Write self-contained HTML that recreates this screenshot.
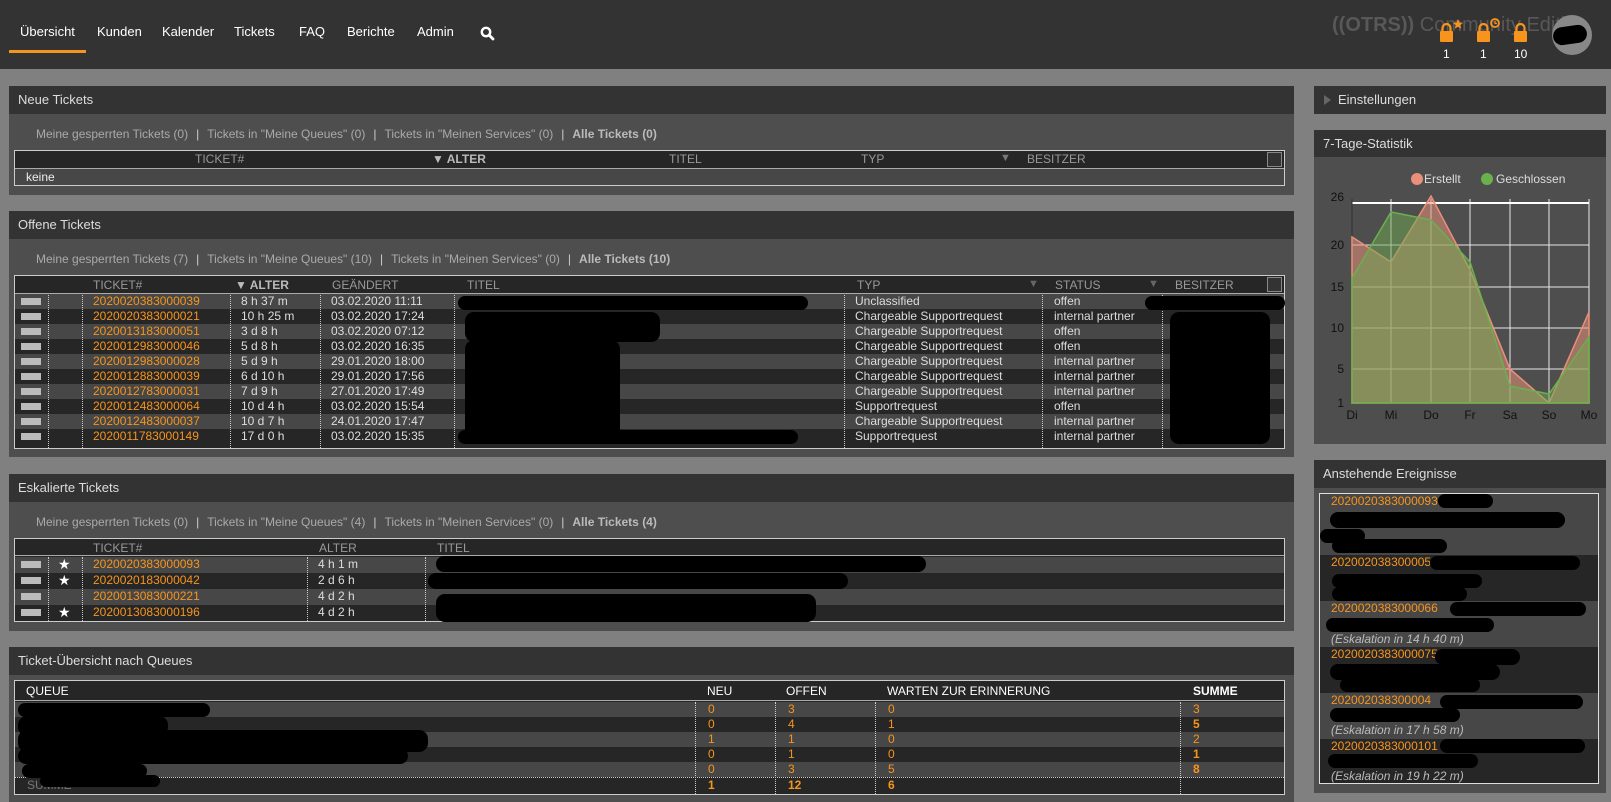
<!DOCTYPE html>
<html><head><meta charset="utf-8"><style>
*{margin:0;padding:0;box-sizing:border-box}
body{width:1611px;height:802px;overflow:hidden;background:#808080;font-family:"Liberation Sans",sans-serif;font-size:12px;color:#ddd;position:relative}
.a{position:absolute}
.hd{background:#333;color:#ddd;font-size:13px;padding-left:9px;line-height:27px}
.bd{background:#4e4e4e}
.lk{color:#aaa;font-size:12px;white-space:nowrap}
.lk b{color:#bbb}
.lk i{font-style:normal;color:#ccc;margin:0 8px}
.tb{border:1px solid #ccc;background:#262626}
.th{background:#262626;color:#999;font-size:11px;line-height:18px;border-bottom:1px solid #aaa}
.r{height:15px;line-height:15px;white-space:nowrap;font-size:12px}
.o{background:#474747}.e{background:#262626}
.or{color:#f7941d}
.dl{border-left:1px dotted #ccc}
.cb{width:20px;height:7px;background:#bbb;top:4px;left:6px}
.blk{background:#000;border-radius:9px}
.hx{font-size:12px;color:#999}
</style></head><body>
<!-- header -->
<div class="a" style="left:0;top:0;width:1611px;height:69px;background:#333"></div>
<div class="a" style="top:24px;left:20px;font-size:13px;color:#fff;white-space:nowrap">Übersicht</div>
<div class="a" style="top:24px;left:97px;font-size:13px;color:#fff">Kunden</div>
<div class="a" style="top:24px;left:162px;font-size:13px;color:#fff">Kalender</div>
<div class="a" style="top:24px;left:234px;font-size:13px;color:#fff">Tickets</div>
<div class="a" style="top:24px;left:299px;font-size:13px;color:#fff">FAQ</div>
<div class="a" style="top:24px;left:347px;font-size:13px;color:#fff">Berichte</div>
<div class="a" style="top:24px;left:417px;font-size:13px;color:#fff">Admin</div>
<svg class="a" style="left:480px;top:26px" width="15" height="15" viewBox="0 0 15 15"><circle cx="6" cy="6" r="4.2" stroke="#fff" stroke-width="2.4" fill="none"/><path d="M9 9l4 4" stroke="#fff" stroke-width="2.8" stroke-linecap="round"/></svg>
<div class="a" style="left:9px;top:50px;width:77px;height:3px;background:#f7941d"></div>
<div class="a" style="left:1332px;top:14px;font-size:20px;color:#585858;white-space:nowrap"><b>((OTRS))</b> Community Edition</div>
<svg class="a" style="left:1436px;top:18px" width="140" height="28">
<g fill="#f7941d"><rect x="4" y="13" width="13" height="11" rx="1"/><path d="M6.5 13v-3a4 4 0 0 1 8 0v3" stroke="#f7941d" stroke-width="2.2" fill="none"/>
<path d="M22 1l1.5 3.5 3.5.3-2.7 2.3.9 3.6-3.2-2-3.2 2 .9-3.6-2.7-2.3 3.5-.3z"/>
<rect x="41" y="13" width="13" height="11" rx="1"/><path d="M43.5 13v-3a4 4 0 0 1 8 0v3" stroke="#f7941d" stroke-width="2.2" fill="none"/>
<circle cx="59" cy="5" r="4" stroke="#f7941d" stroke-width="1.8" fill="none"/><path d="M59 3v2.5h2" stroke="#f7941d" stroke-width="1.2" fill="none"/>
<rect x="78" y="13" width="13" height="11" rx="1"/><path d="M80.5 13v-3a4 4 0 0 1 8 0v3" stroke="#f7941d" stroke-width="2.2" fill="none"/></g></svg>
<div class="a" style="left:1443px;top:47px;color:#fff;font-size:12px">1</div>
<div class="a" style="left:1480px;top:47px;color:#fff;font-size:12px">1</div>
<div class="a" style="left:1514px;top:47px;color:#fff;font-size:12px">10</div>
<div class="a" style="left:1552px;top:15px;width:40px;height:40px;border-radius:50%;background:#888"></div>
<div class="a" style="left:1553px;top:26px;width:34px;height:18px;border-radius:10px;background:#000;transform:rotate(-8deg)"></div>

<!-- Neue Tickets -->
<div class="a hd" style="left:9px;top:86px;width:1285px;height:28px">Neue Tickets</div>
<div class="a bd" style="left:9px;top:114px;width:1285px;height:81px"></div>
<div class="a lk" style="left:36px;top:127px">Meine gesperrten Tickets (0)<i>|</i>Tickets in "Meine Queues" (0)<i>|</i>Tickets in "Meinen Services" (0)<i>|</i><b>Alle Tickets (0)</b></div>
<div class="a tb" style="left:14px;top:150px;width:1271px;height:36px;background:#474747"></div>
<div class="a th" style="left:15px;top:151px;width:1269px;height:18px"></div>
<div class="a hx" style="left:195px;top:152px">TICKET#</div>
<div class="a hx" style="left:432px;top:152px;color:#bbb"><b>▼ ALTER</b></div>
<div class="a hx" style="left:669px;top:152px">TITEL</div>
<div class="a hx" style="left:861px;top:152px">TYP</div>
<div class="a" style="left:1000px;top:152px;font-size:11px;color:#777">▼</div>
<div class="a hx" style="left:1027px;top:152px">BESITZER</div>
<div class="a" style="left:1267px;top:152px;width:15px;height:15px;border:1px solid #888;background:#333"></div>
<div class="a" style="left:26px;top:170px;color:#eee">keine</div>

<!-- Offene Tickets -->
<div class="a hd" style="left:9px;top:211px;width:1285px;height:28px">Offene Tickets</div>
<div class="a bd" style="left:9px;top:239px;width:1285px;height:218px"></div>
<div class="a lk" style="left:36px;top:252px">Meine gesperrten Tickets (7)<i>|</i>Tickets in "Meine Queues" (10)<i>|</i>Tickets in "Meinen Services" (0)<i>|</i><b>Alle Tickets (10)</b></div>
<div class="a tb" style="left:14px;top:275px;width:1271px;height:174px"></div>
<div class="a th" style="left:15px;top:276px;width:1269px;height:18px"></div>
<div class="a hx" style="left:93px;top:278px">TICKET#</div>
<div class="a hx" style="left:235px;top:278px;color:#bbb"><b>▼ ALTER</b></div>
<div class="a hx" style="left:332px;top:278px">GEÄNDERT</div>
<div class="a hx" style="left:467px;top:278px">TITEL</div>
<div class="a hx" style="left:857px;top:278px">TYP</div>
<div class="a" style="left:1028px;top:278px;font-size:11px;color:#666">▼</div>
<div class="a hx" style="left:1055px;top:278px">STATUS</div>
<div class="a" style="left:1148px;top:278px;font-size:11px;color:#666">▼</div>
<div class="a hx" style="left:1175px;top:278px">BESITZER</div>
<div class="a" style="left:1267px;top:277px;width:15px;height:15px;border:1px solid #888;background:#333"></div>
<div class="a" style="left:15px;top:294px;width:1269px">
<div class="r o" style="position:relative"><div class="a cb"></div><span class="a or" style="left:78px">2020020383000039</span><span class="a" style="left:226px">8 h 37 m</span><span class="a" style="left:316px">03.02.2020 11:11</span><span class="a" style="left:840px">Unclassified</span><span class="a" style="left:1039px">offen</span></div>
<div class="r e" style="position:relative"><div class="a cb"></div><span class="a or" style="left:78px">2020020383000021</span><span class="a" style="left:226px">10 h 25 m</span><span class="a" style="left:316px">03.02.2020 17:24</span><span class="a" style="left:840px">Chargeable Supportrequest</span><span class="a" style="left:1039px">internal partner</span></div>
<div class="r o" style="position:relative"><div class="a cb"></div><span class="a or" style="left:78px">2020013183000051</span><span class="a" style="left:226px">3 d 8 h</span><span class="a" style="left:316px">03.02.2020 07:12</span><span class="a" style="left:840px">Chargeable Supportrequest</span><span class="a" style="left:1039px">offen</span></div>
<div class="r e" style="position:relative"><div class="a cb"></div><span class="a or" style="left:78px">2020012983000046</span><span class="a" style="left:226px">5 d 8 h</span><span class="a" style="left:316px">03.02.2020 16:35</span><span class="a" style="left:840px">Chargeable Supportrequest</span><span class="a" style="left:1039px">offen</span></div>
<div class="r o" style="position:relative"><div class="a cb"></div><span class="a or" style="left:78px">2020012983000028</span><span class="a" style="left:226px">5 d 9 h</span><span class="a" style="left:316px">29.01.2020 18:00</span><span class="a" style="left:840px">Chargeable Supportrequest</span><span class="a" style="left:1039px">internal partner</span></div>
<div class="r e" style="position:relative"><div class="a cb"></div><span class="a or" style="left:78px">2020012883000039</span><span class="a" style="left:226px">6 d 10 h</span><span class="a" style="left:316px">29.01.2020 17:56</span><span class="a" style="left:840px">Chargeable Supportrequest</span><span class="a" style="left:1039px">internal partner</span></div>
<div class="r o" style="position:relative"><div class="a cb"></div><span class="a or" style="left:78px">2020012783000031</span><span class="a" style="left:226px">7 d 9 h</span><span class="a" style="left:316px">27.01.2020 17:49</span><span class="a" style="left:840px">Chargeable Supportrequest</span><span class="a" style="left:1039px">internal partner</span></div>
<div class="r e" style="position:relative"><div class="a cb"></div><span class="a or" style="left:78px">2020012483000064</span><span class="a" style="left:226px">10 d 4 h</span><span class="a" style="left:316px">03.02.2020 15:54</span><span class="a" style="left:840px">Supportrequest</span><span class="a" style="left:1039px">offen</span></div>
<div class="r o" style="position:relative"><div class="a cb"></div><span class="a or" style="left:78px">2020012483000037</span><span class="a" style="left:226px">10 d 7 h</span><span class="a" style="left:316px">24.01.2020 17:47</span><span class="a" style="left:840px">Chargeable Supportrequest</span><span class="a" style="left:1039px">internal partner</span></div>
<div class="r e" style="position:relative"><div class="a cb"></div><span class="a or" style="left:78px">2020011783000149</span><span class="a" style="left:226px">17 d 0 h</span><span class="a" style="left:316px">03.02.2020 15:35</span><span class="a" style="left:840px">Supportrequest</span><span class="a" style="left:1039px">internal partner</span></div>
</div>
<div class="a dl" style="left:48px;top:295px;height:153px"></div>
<div class="a dl" style="left:82px;top:295px;height:153px"></div>
<div class="a dl" style="left:230px;top:295px;height:153px"></div>
<div class="a dl" style="left:320px;top:295px;height:153px"></div>
<div class="a dl" style="left:454px;top:295px;height:153px"></div>
<div class="a dl" style="left:844px;top:295px;height:153px"></div>
<div class="a dl" style="left:1042px;top:295px;height:153px"></div>
<div class="a dl" style="left:1162px;top:295px;height:153px"></div>
<div class="a blk" style="left:458px;top:296px;width:350px;height:14px"></div>
<div class="a blk" style="left:465px;top:312px;width:195px;height:30px"></div>
<div class="a blk" style="left:465px;top:340px;width:155px;height:100px"></div>
<div class="a blk" style="left:458px;top:430px;width:340px;height:14px"></div>
<div class="a blk" style="left:1145px;top:296px;width:140px;height:14px"></div>
<div class="a blk" style="left:1170px;top:312px;width:100px;height:132px"></div>

<!-- Eskalierte -->
<div class="a hd" style="left:9px;top:474px;width:1285px;height:28px">Eskalierte Tickets</div>
<div class="a bd" style="left:9px;top:502px;width:1285px;height:129px"></div>
<div class="a lk" style="left:36px;top:515px">Meine gesperrten Tickets (0)<i>|</i>Tickets in "Meine Queues" (4)<i>|</i>Tickets in "Meinen Services" (0)<i>|</i><b>Alle Tickets (4)</b></div>
<div class="a tb" style="left:14px;top:538px;width:1271px;height:84px"></div>
<div class="a th" style="left:15px;top:539px;width:1269px;height:17px;line-height:17px"></div>
<div class="a hx" style="left:93px;top:541px">TICKET#</div>
<div class="a hx" style="left:319px;top:541px">ALTER</div>
<div class="a hx" style="left:437px;top:541px">TITEL</div>
<div class="a" style="left:15px;top:557px;width:1269px">
<div class="r o" style="position:relative;height:16px"><div class="a cb"></div><span class="a" style="left:43px;color:#fff;font-size:14px">★</span><span class="a or" style="left:78px">2020020383000093</span><span class="a" style="left:303px">4 h 1 m</span></div>
<div class="r e" style="position:relative;height:16px"><div class="a cb"></div><span class="a" style="left:43px;color:#fff;font-size:14px">★</span><span class="a or" style="left:78px">2020020183000042</span><span class="a" style="left:303px">2 d 6 h</span></div>
<div class="r o" style="position:relative;height:16px"><div class="a cb"></div><span class="a or" style="left:78px">2020013083000221</span><span class="a" style="left:303px">4 d 2 h</span></div>
<div class="r e" style="position:relative;height:15px"><div class="a cb"></div><span class="a" style="left:43px;color:#fff;font-size:14px">★</span><span class="a or" style="left:78px">2020013083000196</span><span class="a" style="left:303px">4 d 2 h</span></div>
</div>
<div class="a dl" style="left:48px;top:557px;height:64px"></div>
<div class="a dl" style="left:82px;top:557px;height:64px"></div>
<div class="a dl" style="left:307px;top:557px;height:64px"></div>
<div class="a dl" style="left:425px;top:557px;height:64px"></div>
<div class="a blk" style="left:436px;top:556px;width:490px;height:16px"></div>
<div class="a blk" style="left:428px;top:573px;width:420px;height:16px"></div>
<div class="a blk" style="left:436px;top:594px;width:380px;height:28px"></div>

<!-- Queues -->
<div class="a hd" style="left:9px;top:647px;width:1285px;height:28px">Ticket-Übersicht nach Queues</div>
<div class="a bd" style="left:9px;top:675px;width:1285px;height:127px"></div>
<div class="a tb" style="left:14px;top:680px;width:1271px;height:115px"></div>
<div class="a th" style="left:15px;top:681px;width:1269px;height:20px;line-height:20px"></div>
<div class="a" style="left:26px;top:684px;font-size:12px;color:#fff">QUEUE</div>
<div class="a" style="left:707px;top:684px;font-size:12px;color:#fff">NEU</div>
<div class="a" style="left:786px;top:684px;font-size:12px;color:#fff">OFFEN</div>
<div class="a" style="left:887px;top:684px;font-size:12px;color:#fff">WARTEN ZUR ERINNERUNG</div>
<div class="a" style="left:1193px;top:684px;font-size:12px;color:#fff"><b>SUMME</b></div>
<div class="a" style="left:15px;top:702px;width:1269px">
<div class="r o" style="position:relative"><span class="a or" style="left:693px">0</span><span class="a or" style="left:773px">3</span><span class="a or" style="left:873px">0</span><span class="a or" style="left:1178px">3</span></div>
<div class="r e" style="position:relative"><span class="a or" style="left:693px">0</span><span class="a or" style="left:773px">4</span><span class="a or" style="left:873px">1</span><span class="a or" style="left:1178px"><b>5</b></span></div>
<div class="r o" style="position:relative"><span class="a or" style="left:693px">1</span><span class="a or" style="left:773px">1</span><span class="a or" style="left:873px">0</span><span class="a or" style="left:1178px">2</span></div>
<div class="r e" style="position:relative"><span class="a or" style="left:693px">0</span><span class="a or" style="left:773px">1</span><span class="a or" style="left:873px">0</span><span class="a or" style="left:1178px"><b>1</b></span></div>
<div class="r o" style="position:relative"><span class="a or" style="left:693px">0</span><span class="a or" style="left:773px">3</span><span class="a or" style="left:873px">5</span><span class="a or" style="left:1178px"><b>8</b></span></div>
<div class="r e" style="position:relative;border-top:1px dotted #ccc;height:16px"><span class="a" style="left:12px;color:#777">SUMME</span><span class="a or" style="left:693px"><b>1</b></span><span class="a or" style="left:773px"><b>12</b></span><span class="a or" style="left:873px"><b>6</b></span></div>
</div>
<div class="a dl" style="left:695px;top:702px;height:92px"></div>
<div class="a dl" style="left:775px;top:702px;height:92px"></div>
<div class="a dl" style="left:875px;top:702px;height:92px"></div>
<div class="a dl" style="left:1180px;top:702px;height:92px"></div>
<div class="a blk" style="left:18px;top:703px;width:192px;height:14px"></div>
<div class="a blk" style="left:18px;top:716px;width:150px;height:20px"></div>
<div class="a blk" style="left:18px;top:730px;width:410px;height:22px"></div>
<div class="a blk" style="left:18px;top:748px;width:390px;height:16px"></div>
<div class="a blk" style="left:22px;top:764px;width:125px;height:14px"></div>
<div class="a blk" style="left:40px;top:775px;width:120px;height:12px"></div>

<!-- Right column -->
<div class="a hd" style="left:1314px;top:86px;width:292px;height:28px;padding-left:24px">Einstellungen</div>
<div class="a" style="left:1324px;top:95px;width:0;height:0;border-left:7px solid #666;border-top:5px solid transparent;border-bottom:5px solid transparent"></div>

<div class="a hd" style="left:1314px;top:130px;width:292px;height:27px">7-Tage-Statistik</div>
<div class="a bd" style="left:1314px;top:157px;width:292px;height:287px"></div>
<svg class="a" style="left:1314px;top:157px" width="292" height="287">
<circle cx="103" cy="22" r="6" fill="#e8907a"/><text x="110" y="26" fill="#ddd" font-size="12" font-family="Liberation Sans">Erstellt</text>
<circle cx="173" cy="22" r="6" fill="#6ab04c"/><text x="182" y="26" fill="#ddd" font-size="12" font-family="Liberation Sans">Geschlossen</text>
<g stroke="#e8e8e8" stroke-width="1">
<line x1="38" y1="88" x2="275" y2="88"/><line x1="38" y1="130" x2="275" y2="130"/><line x1="38" y1="171" x2="275" y2="171"/><line x1="38" y1="212" x2="275" y2="212"/><line x1="38" y1="246" x2="275" y2="246"/>
<line x1="77" y1="42" x2="77" y2="246"/><line x1="117" y1="42" x2="117" y2="246"/><line x1="156" y1="42" x2="156" y2="246"/><line x1="196" y1="42" x2="196" y2="246"/><line x1="235" y1="42" x2="235" y2="246"/><line x1="275" y1="42" x2="275" y2="246"/>
</g>
<line x1="38" y1="46" x2="275" y2="46" stroke="#fff" stroke-width="2"/>
<line x1="38" y1="42" x2="38" y2="246" stroke="#333" stroke-width="1"/>
<path d="M38 80L77 105L117 39L156 113L196 212L235 246L275 155L275 246L38 246Z" fill="rgba(232,144,122,0.55)" stroke="#e8907a" stroke-width="1.5"/>
<path d="M38 121L77 55L117 63L156 105L196 229L235 237L275 180L275 246L38 246Z" fill="rgba(110,170,80,0.5)" stroke="#6ab04c" stroke-width="1.5"/>
<g fill="#111" font-size="12" font-family="Liberation Sans" text-anchor="end">
<text x="30" y="44">26</text><text x="30" y="92">20</text><text x="30" y="134">15</text><text x="30" y="175">10</text><text x="30" y="216">5</text><text x="30" y="250">1</text></g>
<g fill="#111" font-size="12" font-family="Liberation Sans" text-anchor="middle">
<text x="38" y="262">Di</text><text x="77" y="262">Mi</text><text x="117" y="262">Do</text><text x="156" y="262">Fr</text><text x="196" y="262">Sa</text><text x="235" y="262">So</text><text x="275" y="262">Mo</text></g>
</svg>

<div class="a hd" style="left:1314px;top:460px;width:292px;height:28px">Anstehende Ereignisse</div>
<div class="a bd" style="left:1314px;top:488px;width:292px;height:305px"></div>
<div class="a" style="left:1319px;top:493px;width:280px;height:291px;border:1px solid #ddd;background:#474747;overflow:hidden">
<div class="a" style="left:0;top:61px;width:280px;height:46px;background:#262626"></div>
<div class="a" style="left:0;top:153px;width:280px;height:46px;background:#262626"></div>
<div class="a" style="left:0;top:245px;width:280px;height:46px;background:#262626"></div>
<div class="a or" style="left:11px;top:0">2020020383000093</div>
<div class="a or" style="left:11px;top:61px">202002038300005</div>
<div class="a or" style="left:11px;top:107px">2020020383000066</div>
<div class="a or" style="left:11px;top:153px">2020020383000075</div>
<div class="a or" style="left:11px;top:199px">202002038300004</div>
<div class="a or" style="left:11px;top:245px">2020020383000101</div>
<div class="a" style="left:11px;top:138px;font-style:italic;color:#bbb">(Eskalation in 14 h 40 m)</div>
<div class="a" style="left:11px;top:229px;font-style:italic;color:#bbb">(Eskalation in 17 h 58 m)</div>
<div class="a" style="left:11px;top:275px;font-style:italic;color:#bbb">(Eskalation in 19 h 22 m)</div>
<div class="a blk" style="left:118px;top:0;width:55px;height:14px"></div>
<div class="a blk" style="left:10px;top:18px;width:235px;height:16px"></div>
<div class="a blk" style="left:0;top:35px;width:45px;height:14px"></div>
<div class="a blk" style="left:12px;top:45px;width:115px;height:14px"></div>
<div class="a blk" style="left:110px;top:62px;width:150px;height:14px"></div>
<div class="a blk" style="left:12px;top:80px;width:150px;height:14px"></div>
<div class="a blk" style="left:12px;top:93px;width:135px;height:14px"></div>
<div class="a blk" style="left:130px;top:108px;width:136px;height:14px"></div>
<div class="a blk" style="left:6px;top:124px;width:168px;height:14px"></div>
<div class="a blk" style="left:115px;top:155px;width:85px;height:16px"></div>
<div class="a blk" style="left:10px;top:170px;width:170px;height:16px"></div>
<div class="a blk" style="left:20px;top:184px;width:140px;height:14px"></div>
<div class="a blk" style="left:120px;top:201px;width:143px;height:14px"></div>
<div class="a blk" style="left:10px;top:214px;width:130px;height:14px"></div>
<div class="a blk" style="left:120px;top:245px;width:145px;height:14px"></div>
<div class="a blk" style="left:8px;top:260px;width:150px;height:14px"></div>
</div>
</body></html>
